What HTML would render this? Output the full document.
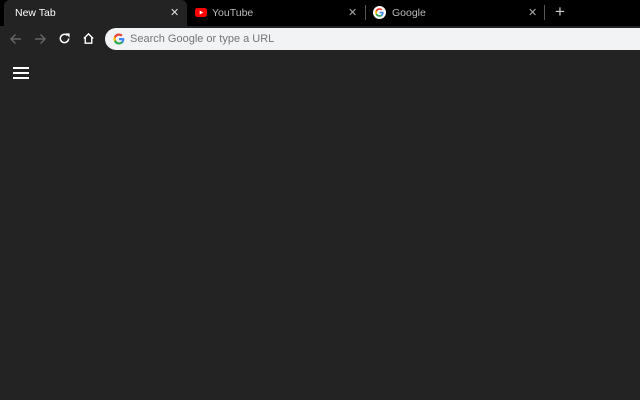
<!DOCTYPE html>
<html><head><style>
*{margin:0;padding:0;box-sizing:border-box}
body{width:640px;height:400px;background:#232323;overflow:hidden;position:relative;font-family:"Liberation Sans",Arial,sans-serif}
.tabs{position:absolute;left:0;top:0;width:640px;height:26px;background:#000}
.tab{position:absolute;top:0;height:26px;font-size:10.5px;color:#bbb;line-height:27px}
.active{left:4px;width:183px;background:#232323;border-radius:6px 6px 0 0;color:#fff}
.x{position:absolute;font-size:11px;color:#aaa;top:0}
.sep{position:absolute;top:5px;width:1px;height:15px;background:#555}
.tool{position:absolute;left:0;top:26px;width:640px;height:25px;background:#232323}
.url{position:absolute;left:105px;top:28px;width:545px;height:22px;background:#f1f3f4;border-radius:11px}
.url span{position:absolute;left:25px;top:5px;font-size:11px;color:#757575}
</style></head><body>
<div class="tabs">
 <div class="tab active"><span style="position:absolute;left:11px">New Tab</span><span class="x" style="left:166px;color:#ddd">✕</span></div>
 <div class="tab" style="left:187px;width:180px">
  <svg style="position:absolute;left:8px;top:8px" width="12" height="9" viewBox="0 0 12 9"><rect width="12" height="9" rx="2.5" fill="#f00"/><path d="M4.7 2.5v4l3.5-2z" fill="#fff"/></svg>
  <span style="position:absolute;left:25px">YouTube</span><span class="x" style="left:161px">✕</span></div>
 <div class="sep" style="left:365px"></div>
 <div class="tab" style="left:367px;width:180px">
  <svg style="position:absolute;left:6px;top:6px" width="13" height="13" viewBox="0 0 24 24"><circle cx="12" cy="12" r="12" fill="#fff"/><path d="M19.6 12.2c0-.6-.1-1.1-.2-1.6H12v3h4.3a3.7 3.7 0 0 1-1.6 2.4v2h2.6c1.5-1.4 2.3-3.4 2.3-5.8z" fill="#4285F4"/><path d="M12 20c2.2 0 4-.7 5.3-1.9l-2.6-2c-.7.5-1.6.8-2.7.8-2.1 0-3.900-1.4-4.5-3.3H4.8v2.1A8 8 0 0 0 12 20z" fill="#34A853"/><path d="M7.5 13.6a4.8 4.8 0 0 1 0-3.1V8.4H4.8a8 8 0 0 0 0 7.2z" fill="#FBBC05"/><path d="M12 7.2c1.2 0 2.2.4 3.1 1.2l2.3-2.3A8 8 0 0 0 4.8 8.4l2.7 2.1c.6-1.9 2.4-3.3 4.5-3.3z" fill="#EA4335"/></svg>
  <span style="position:absolute;left:25px">Google</span><span class="x" style="left:161px">✕</span></div>
 <div class="sep" style="left:544px"></div>
 <div style="position:absolute;left:555px;top:3px;color:#ccc;font-size:17px;line-height:18px">+</div>
</div>
<div class="tool">
 <svg style="position:absolute;left:9px;top:6px" width="14" height="14" viewBox="0 0 14 14"><path d="M12 7H2M6.5 2.5 2 7l4.5 4.5" stroke="#666" stroke-width="1.4" fill="none"/></svg>
 <svg style="position:absolute;left:33px;top:6px" width="14" height="14" viewBox="0 0 14 14"><path d="M2 7h10M7.5 2.5 12 7l-4.5 4.5" stroke="#666" stroke-width="1.4" fill="none"/></svg>
 <svg style="position:absolute;left:58px;top:6px" width="13" height="13" viewBox="0 0 14 14"><path d="M11.5 7A4.5 4.5 0 1 1 10 3.6" stroke="#fff" stroke-width="1.6" fill="none"/><path d="M8 1.5h4.5V6z" fill="#fff"/></svg>
 <svg style="position:absolute;left:82px;top:6px" width="13" height="13" viewBox="0 0 14 14"><path d="M2 7 7 2l5 5M3.5 6v6h7V6" stroke="#fff" stroke-width="1.5" fill="none"/></svg>
</div>
<div class="url">
 <svg style="position:absolute;left:8px;top:5px" width="12" height="12" viewBox="0 0 24 24"><path d="M22.6 12.3c0-.8-.1-1.6-.2-2.3H12v4.4h6a5 5 0 0 1-2.2 3.3v2.7h3.6c2-1.9 3.2-4.7 3.2-8.1z" fill="#4285F4"/><path d="M12 23c3 0 5.5-1 7.4-2.7l-3.6-2.7c-1 .7-2.3 1.1-3.8 1.1-2.9 0-5.4-2-6.3-4.6H2v2.8A11 11 0 0 0 12 23z" fill="#34A853"/><path d="M5.7 14.1a6.6 6.6 0 0 1 0-4.2V7.1H2a11 11 0 0 0 0 9.8z" fill="#FBBC05"/><path d="M12 5.4c1.6 0 3.1.6 4.2 1.7l3.2-3.2A11 11 0 0 0 2 7.1l3.7 2.8C6.6 7.3 9.1 5.4 12 5.4z" fill="#EA4335"/></svg>
 <span>Search Google or type a URL</span>
</div>
<div style="position:absolute;left:13px;top:67px;width:16px">
 <div style="height:2px;background:#fff;margin-bottom:3px"></div>
 <div style="height:2px;background:#fff;margin-bottom:3px"></div>
 <div style="height:2px;background:#fff"></div>
</div>
</body></html>
